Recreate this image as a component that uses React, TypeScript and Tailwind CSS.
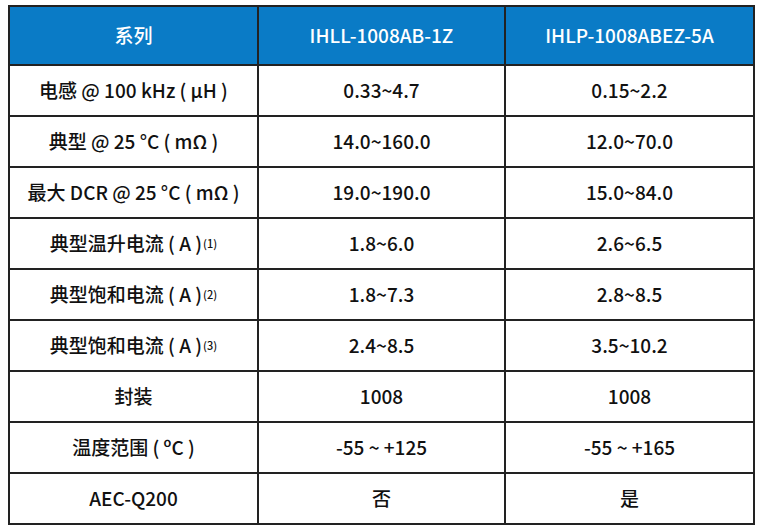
import React from "react";

const sup = (n: string) => <span className="text-[11px] relative top-[-3px] ml-[1px]">({n})</span>;

const rows: [React.ReactNode, string, string][] = [
  ["电感 @ 100 kHz ( µH )", "0.33~4.7", "0.15~2.2"],
  ["典型 @ 25 °C ( mΩ )", "14.0~160.0", "12.0~70.0"],
  ["最大 DCR @ 25 °C ( mΩ )", "19.0~190.0", "15.0~84.0"],
  [<>典型温升电流 ( A ){sup("1")}</>, "1.8~6.0", "2.6~6.5"],
  [<>典型饱和电流 ( A ){sup("2")}</>, "1.8~7.3", "2.8~8.5"],
  [<>典型饱和电流 ( A ){sup("3")}</>, "2.4~8.5", "3.5~10.2"],
  ["封装", "1008", "1008"],
  ["温度范围 ( ºC )", "-55 ~ +125", "-55 ~ +165"],
  ["AEC-Q200", "否", "是"],
];

export default function App() {
  return (
    <div
      className="w-[757px] h-[528px] bg-white pl-[8px] pt-[5px]"
      style={{ fontFamily: '"Noto Sans CJK SC", "Noto Sans", sans-serif' }}
    >
      <table className="border-collapse w-[745px] table-fixed text-[19px] text-[#111]">
        <colgroup>
          <col className="w-[249px]" />
          <col className="w-[247px]" />
          <col className="w-[249px]" />
        </colgroup>
        <thead>
          <tr className="h-[59px] bg-[#0a7bc6] text-white">
            <th className="border-2 border-[#222] font-medium">系列</th>
            <th className="border-2 border-[#222] font-medium">IHLL-1008AB-1Z</th>
            <th className="border-2 border-[#222] font-medium">IHLP-1008ABEZ-5A</th>
          </tr>
        </thead>
        <tbody>
          {rows.map((r, i) => (
            <tr key={i} className="h-[51px]">
              <td className="border-2 border-[#222] text-center font-medium">{r[0]}</td>
              <td className="border-2 border-[#222] text-center font-medium">{r[1]}</td>
              <td className="border-2 border-[#222] text-center font-medium">{r[2]}</td>
            </tr>
          ))}
        </tbody>
      </table>
    </div>
  );
}
